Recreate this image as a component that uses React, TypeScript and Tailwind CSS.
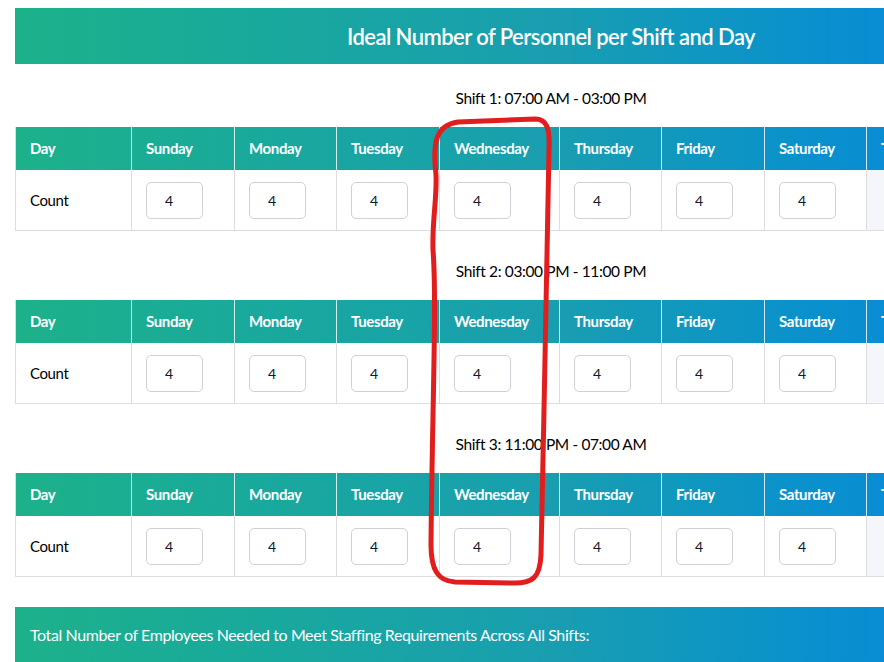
import React from "react";

const days = ["Sunday", "Monday", "Tuesday", "Wednesday", "Thursday", "Friday", "Saturday"];

const shifts = [
  "Shift 1: 07:00 AM - 03:00 PM",
  "Shift 2: 03:00 PM - 11:00 PM",
  "Shift 3: 11:00 PM - 07:00 AM",
];

const grid =
  "grid grid-cols-[115px_103px_102px_103px_120px_102px_103px_102px_1fr]";

const band = "bg-linear-to-r from-[#1db18a] via-[#199eb0] to-[#0f7fe9]";

function ShiftTable({ title }: { title: string }) {
  return (
    <div>
      <h3 className="h-[63px] pt-[6px] flex items-center justify-center text-[15.5px] text-black tracking-tight">
        {title}
      </h3>
      <div className="border-l border-[#dcdde2]">
        <div className={`${grid} ${band} h-[43px] text-white font-bold text-[15px] tracking-tight`}>
          <div className="flex items-center px-[14px]">Day</div>
          {days.map((d) => (
            <div key={d} className="flex items-center px-[14px] border-l border-white/80">
              {d}
            </div>
          ))}
          <div className="flex items-center px-[14px] border-l border-white/80">Total</div>
        </div>
        <div className={`${grid} h-[61px] border-b border-[#dcdde2]`}>
          <div className="flex items-center px-[14px] text-[15px] text-black tracking-tight">Count</div>
          {days.map((d) => (
            <div key={d} className="flex items-center px-[14px] border-l border-[#dcdde2]">
              <input
                defaultValue="4"
                className="w-[57px] h-[37px] border border-[#cfd1d6] rounded-[5px] pl-[18px] text-[14px] text-[#111827] outline-none"
              />
            </div>
          ))}
          <div className="border-l border-[#dcdde2] bg-[#f5f6f9]" />
        </div>
      </div>
    </div>
  );
}

export default function App() {
  return (
    <div className="relative w-[884px] h-[662px] overflow-hidden bg-white font-['Lato',sans-serif]">
      <div className="w-[1072px] ml-[15px] pt-2">
        <div className={`${band} h-[56px] flex items-center justify-center`}>
          <h1 className="text-white text-[22px] font-semibold tracking-tight">
            Ideal Number of Personnel per Shift and Day
          </h1>
        </div>
        <div className="flex flex-col gap-[6px]">
          {shifts.map((s) => (
            <ShiftTable key={s} title={s} />
          ))}
        </div>
        <div className={`${band} mt-[30px] h-[56px] flex items-center px-[15px] text-white text-[16px] tracking-tight`}>
          Total Number of Employees Needed to Meet Staffing Requirements Across All Shifts:
        </div>
      </div>

      {/* red marker annotation around the Wednesday column */}
      <svg className="absolute left-0 top-0 pointer-events-none" width="884" height="662">
        <path
          d="M436 175 C432 140 437 125 458 122 L535 119 C547 119 550 128 549 150 C547 250 544 420 541 555 C540 578 532 583 515 583 L455 582 C438 581 431 570 431 545 C432 420 437 300 433 250 C432 220 437 200 436 175 Z"
          fill="none"
          stroke="#e11d1d"
          strokeWidth="5"
          strokeLinejoin="round"
        />
      </svg>
    </div>
  );
}
